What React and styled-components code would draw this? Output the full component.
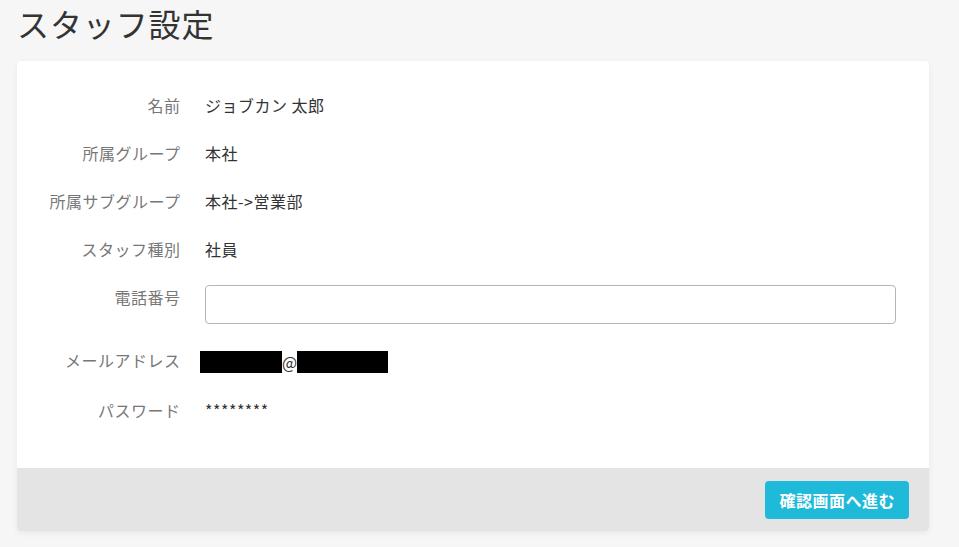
import React from 'react';
import styled, { createGlobalStyle } from 'styled-components';

const GlobalStyle = createGlobalStyle`
  body {
    margin: 0;
    background: #f6f6f6;
    font-family: "Noto Sans CJK JP", "Noto Sans", sans-serif;
    color: #333;
  }
`;

const Page = styled.div`
  padding: 4px 30px 16px 17px;
`;

const Title = styled.h1`
  margin: 0 0 18px;
  font-size: 32px;
  font-weight: 400;
  line-height: 39px;
  letter-spacing: 0.9px;
  color: #333;
`;

const Card = styled.div`
  background: #fff;
  border-radius: 4px;
  box-shadow: 0 2px 6px rgba(0, 0, 0, 0.06);
  overflow: hidden;
`;

const Body = styled.div`
  display: flex;
  flex-direction: column;
  gap: 24px;
  padding: 32px 33px 46px 0;
`;

const Row = styled.div`
  display: grid;
  grid-template-columns: 163px 1fr;
  column-gap: 25px;
  align-items: start;
  font-size: 16px;
  line-height: 24px;
  letter-spacing: 0.5px;
`;

const Label = styled.div`
  text-align: right;
  color: #777;
  margin-right: -0.5px;
`;

const Value = styled.div`
  color: #333;
  display: flex;
  align-items: center;
`;

const TextInput = styled.input`
  box-sizing: border-box;
  width: 100%;
  height: 39px;
  border: 1px solid #b5b5b5;
  border-radius: 4px;
  padding: 0 10px;
  font-size: 16px;
  font-family: inherit;
  outline: none;
  background: #fff;
`;

const Redacted = styled.span`
  display: inline-block;
  width: ${p => p.w}px;
  height: 22px;
  background: #000;
`;

const MailValue = styled(Value)`
  margin-left: -5px;
  padding-top: 2px;
  letter-spacing: 0;
`;

const Footer = styled.div`
  display: flex;
  justify-content: flex-end;
  background: #e4e4e4;
  padding: 13px 20px 12px;
`;

const Button = styled.button`
  height: 38px;
  padding: 0 14px;
  border: none;
  border-radius: 4px;
  background: #1fb9d9;
  color: #fff;
  font-family: inherit;
  font-size: 16px;
  font-weight: 700;
  letter-spacing: 0.5px;
  cursor: pointer;
`;

const fields = [
  { label: '名前', value: 'ジョブカン 太郎' },
  { label: '所属グループ', value: '本社' },
  { label: '所属サブグループ', value: '本社->営業部' },
  { label: 'スタッフ種別', value: '社員' },
];

export default function App() {
  return (
    <Page>
      <GlobalStyle />
      <Title>スタッフ設定</Title>
      <Card>
        <Body>
          {fields.map(f => (
            <Row key={f.label}>
              <Label>{f.label}</Label>
              <Value>{f.value}</Value>
            </Row>
          ))}
          <Row>
            <Label>電話番号</Label>
            <TextInput type="text" />
          </Row>
          <Row>
            <Label>メールアドレス</Label>
            <MailValue>
              <Redacted w={82} />@<Redacted w={91} />
            </MailValue>
          </Row>
          <Row>
            <Label>パスワード</Label>
            <Value>********</Value>
          </Row>
        </Body>
        <Footer>
          <Button>確認画面へ進む</Button>
        </Footer>
      </Card>
    </Page>
  );
}
